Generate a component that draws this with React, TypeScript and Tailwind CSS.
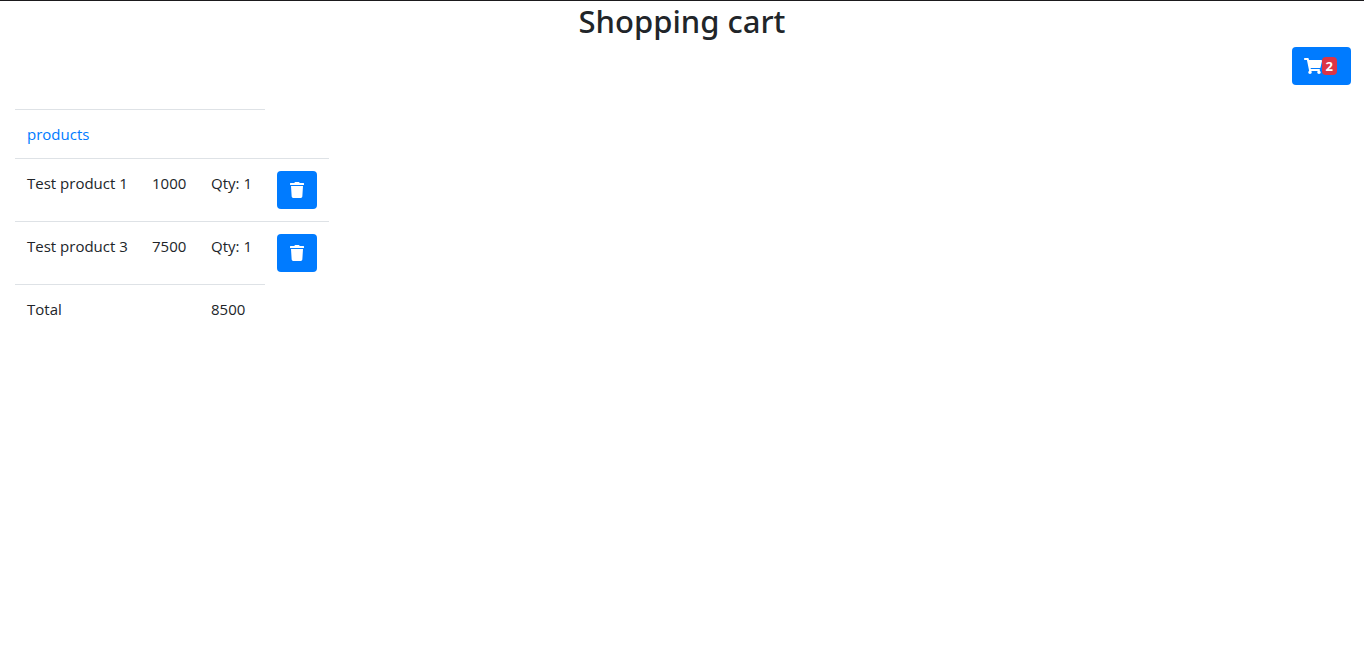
import { FaShoppingCart, FaTrash } from "react-icons/fa";

const items = [
  { name: "Test product 1", price: 1000, qty: 1 },
  { name: "Test product 3", price: 7500, qty: 1 },
];

const cell = "border-t border-[#dee2e6] p-3 align-top text-left font-normal";

export default function App() {
  const total = items.reduce((sum, item) => sum + item.price * item.qty, 0);
  return (
    <div className="min-h-screen border-t border-[#1b1a1d] bg-white font-['Open_Sans',sans-serif] text-[15px] leading-6 text-[#212529]">
      <h1 className="mb-1.5 text-center font-['Noto_Sans',sans-serif] text-[31px] leading-10 font-medium">Shopping cart</h1>
      <div className="flex justify-end px-[13px]">
        <button
          type="button"
          aria-label="Cart"
          className="flex h-[38px] items-center rounded bg-[#007bff] px-3 text-white"
        >
          <FaShoppingCart className="h-4 w-[18px] shrink-0" />
          <span className="mr-0.5 rounded bg-[#dc3545] px-1 py-[3px] text-[13px] leading-3 font-bold">{items.length}</span>
        </button>
      </div>
      <main className="px-[15px] pt-6">
        <table className="border-collapse">
          <colgroup>
            <col className="w-[125px]" />
            <col className="w-[59px]" />
            <col className="w-[66px]" />
            <col className="w-16" />
          </colgroup>
          <tbody>
            <tr>
              <td colSpan={3} className={cell}>
                <a href="#products" className="text-[#007bff]">products</a>
              </td>
            </tr>
            {items.map((item) => (
              <tr key={item.name}>
                <td className={cell}>{item.name}</td>
                <td className={cell}>{item.price}</td>
                <td className={cell}>Qty: {item.qty}</td>
                <td className={cell}>
                  <button
                    type="button"
                    aria-label={`Remove ${item.name}`}
                    className="flex h-[38px] w-10 items-center justify-center rounded bg-[#007bff] text-white"
                  >
                    <FaTrash className="h-4 w-[14px]" />
                  </button>
                </td>
              </tr>
            ))}
            <tr>
              <td colSpan={2} className={cell}>Total</td>
              <td className={cell}>{total}</td>
            </tr>
          </tbody>
        </table>
      </main>
    </div>
  );
}
